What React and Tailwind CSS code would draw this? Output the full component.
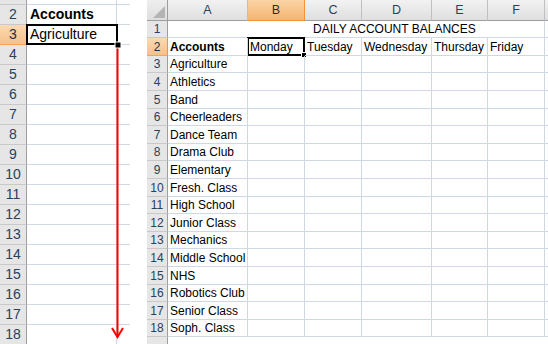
import React from 'react';

const FONT = { fontFamily: '"Liberation Sans", Arial, sans-serif' };

const accounts = [
  'Agriculture', 'Athletics', 'Band', 'Cheerleaders', 'Dance Team', 'Drama Club',
  'Elementary', 'Fresh. Class', 'High School', 'Junior Class', 'Mechanics',
  'Middle School', 'NHS', 'Robotics Club', 'Senior Class', 'Soph. Class',
];

// row heights of the right sheet (rows 2..18)
const heights = [18, 17, 18, 18, 17, 18, 17, 18, 18, 17, 18, 17, 18, 18, 17, 18, 17];
const hClass = { 17: 'h-[17px]', 18: 'h-[18px]' };

const cols = [
  { key: 'A', w: 'w-[80px]' },
  { key: 'B', w: 'w-[57px]' },
  { key: 'C', w: 'w-[57px]' },
  { key: 'D', w: 'w-[70px]' },
  { key: 'E', w: 'w-[56px]' },
  { key: 'F', w: 'w-[57px]' },
];
const days = ['Monday', 'Tuesday', 'Wednesday', 'Thursday', 'Friday'];

function RowHead({ n, active, className = '' }) {
  return (
    <div
      className={`shrink-0 flex items-center justify-center border-b border-r box-border text-[12px] ${
        active
          ? 'bg-gradient-to-b from-[#fbd9b3] to-[#f7c089] border-b-[#f2a55a] border-r-[#f29436] text-[#1e2f45]'
          : 'bg-[#e6e6e6] border-b-[#c9c9c9] border-r-[#9e9e9e] text-[#27415f]'
      } ${className}`}
    >
      {n}
    </div>
  );
}

function LeftPane() {
  const rows = [];
  for (let n = 2; n <= 18; n++) rows.push(n);
  return (
    <div className="relative w-[130px] h-[344px] shrink-0 overflow-hidden">
      <div className="flex h-[5px]">
        <div className="w-[27px] shrink-0 bg-[#e6e6e6] border-r border-b border-r-[#9e9e9e] border-b-[#c9c9c9]" />
        <div className="w-[90px] border-r border-b border-[#d0d7e5]" />
        <div className="flex-1 border-b border-[#d0d7e5]" />
      </div>
      {rows.map((n) => (
        <div key={n} className="flex h-[20px]">
          <RowHead n={n} active={n === 3} className="w-[27px] text-[14px]" />
          <div className="relative w-[90px] shrink-0 border-r border-b border-[#d0d7e5] box-border flex items-center pl-[3px] text-[14px] text-black whitespace-nowrap">
            {n === 2 && <span className="font-bold">Accounts</span>}
            {n === 3 && (
              <>
                <span>Agriculture</span>
                <div className="absolute -left-[1px] -top-[1px] w-[92px] h-[21px] border-2 border-black" />
              </>
            )}
          </div>
          <div className="flex-1 border-b border-[#d0d7e5]" />
        </div>
      ))}
      <svg className="absolute left-0 top-0" width="130" height="344">
        <line x1="117.5" y1="46" x2="117.5" y2="337" stroke="#ff0000" strokeWidth="2" />
        <polyline points="112,328 117.5,337 123,328" fill="none" stroke="#ff0000" strokeWidth="2" />
        <rect x="115" y="42" width="6" height="6" fill="#000" stroke="#fff" strokeWidth="1" />
      </svg>
    </div>
  );
}

function RightPane() {
  return (
    <div className="ml-[17px] flex-1 h-[344px] overflow-hidden">
      {/* column headers */}
      <div className="flex h-[21px]">
        <div className="relative w-[21px] shrink-0 bg-gradient-to-b from-[#eeeeee] to-[#dedede] border-r border-b border-[#9e9e9e]">
          <svg className="absolute right-[2px] bottom-[2px]" width="12" height="12">
            <polygon points="12,0 12,12 0,12" fill="#b4b4b4" />
          </svg>
        </div>
        {cols.map((c) => (
          <div
            key={c.key}
            className={`${c.w} shrink-0 flex items-center justify-center border-r border-b box-border text-[12.5px] ${
              c.key === 'B'
                ? 'bg-gradient-to-b from-[#fbd3a6] to-[#f6b56e] border-r-[#f29436] border-b-[#f29436] text-[#1e2f45]'
                : 'bg-gradient-to-b from-[#f2f2f2] to-[#dfdfdf] border-r-[#c0c0c0] border-b-[#9e9e9e] text-[#27415f]'
            }`}
          >
            {c.key}
          </div>
        ))}
        <div className="flex-1 bg-gradient-to-b from-[#f2f2f2] to-[#dfdfdf] border-b border-[#9e9e9e]" />
      </div>

      {/* row 1: merged title */}
      <div className="flex h-[17px]">
        <RowHead n={1} className="w-[21px]" />
        <div className="w-[377px] shrink-0 border-r border-b border-[#d0d7e5] box-border flex items-center pl-[145px] text-[12px] text-black whitespace-nowrap">
          DAILY ACCOUNT BALANCES
        </div>
        <div className="flex-1 border-b border-[#d0d7e5]" />
      </div>

      {heights.map((h, i) => {
        const n = i + 2;
        return (
          <div key={n} className={`flex ${hClass[h]}`}>
            <RowHead n={n} active={n === 2} className="w-[21px]" />
            {cols.map((c, ci) => {
              let text = null;
              if (ci === 0) {
                text = n === 2 ? <span className="font-bold">Accounts</span> : accounts[n - 3];
              } else if (n === 2) {
                text = days[ci - 1];
              }
              const sel = n === 2 && c.key === 'B';
              return (
                <div
                  key={c.key}
                  className={`${c.w} relative shrink-0 border-r border-b border-[#d0d7e5] box-border flex items-center pl-[2px] text-[12px] text-black whitespace-nowrap ${
                    ci === 0 ? 'z-10' : ''
                  }`}
                >
                  {text}
                  {sel && (
                    <>
                      <div className="absolute -left-[1px] -top-[1px] w-[58px] h-[19px] border-2 border-black" />
                      <div className="absolute -right-[3px] -bottom-[3px] w-[6px] h-[6px] bg-black border border-white" />
                    </>
                  )}
                </div>
              );
            })}
            <div className="flex-1 border-b border-[#d0d7e5]" />
          </div>
        );
      })}

      <div className="flex h-[10px]">
        <RowHead n="" className="w-[21px]" />
        <div className="flex-1" />
      </div>
    </div>
  );
}

export default function App() {
  return (
    <div className="w-[548px] h-[344px] bg-white flex overflow-hidden" style={FONT}>
      <LeftPane />
      <RightPane />
    </div>
  );
}
